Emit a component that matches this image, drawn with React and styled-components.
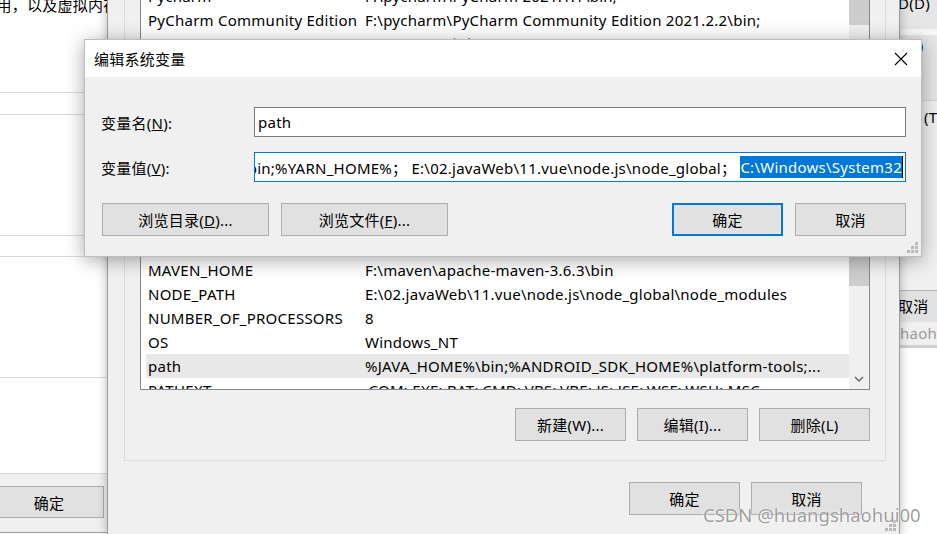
import React from "react";
import styled, { createGlobalStyle, css } from "styled-components";

const GlobalStyle = createGlobalStyle`
  html, body { margin: 0; padding: 0; }
  body {
    background: #ffffff;
    font-family: "Noto Sans", "Noto Sans CJK SC", sans-serif;
    font-size: 15px;
    color: #000;
    overflow: hidden;
  }
  * { box-sizing: border-box; }
`;

const Desktop = styled.div`
  position: relative;
  width: 937px;
  height: 534px;
  overflow: hidden;
  background: #fff;
  letter-spacing: 0.25px;
`;

/* ---- window behind, on the left ---- */
const BackWindow = styled.div`
  position: absolute;
  left: -60px;
  top: -40px;
  width: 190px;
  height: 573px;
  background: #fff;
  border-bottom: 1px solid #9d9d9d;
  display: flex;
  flex-direction: column;
  z-index: 1;
`;

const Band = styled.div`
  height: ${({ $h }) => $h}px;
  flex-shrink: 0;
  border-bottom: ${({ $line }) => ($line ? "1px solid #dadada" : "none")};
  padding: ${({ $pad }) => $pad || 0};
  line-height: 20px;
  white-space: nowrap;
`;

const BackFooter = styled.div`
  flex: 1;
  background: #f0f0f0;
  border-top: 1px solid #dadada;
  display: flex;
  justify-content: flex-end;
  align-items: flex-start;
  padding: 12px 26px 0 0;
`;

/* ---- window behind, on the right ---- */
const SideWindow = styled.div`
  position: absolute;
  left: 880px;
  top: -20px;
  width: 120px;
  height: 600px;
  background: #f0f0f0;
  display: flex;
  flex-direction: column;
  z-index: 1;
`;

const SideItem = styled.div`
  height: ${({ $h }) => $h}px;
  flex-shrink: 0;
  background: ${({ $bg }) => $bg || "#f0f0f0"};
  border-top: ${({ $line }) => ($line ? `1px solid ${$line}` : "none")};
  padding: ${({ $top }) => $top || 0}px 0 0 ${({ $left }) => $left || 0}px;
  color: ${({ $muted }) => ($muted ? "#9a9a9a" : "#000")};
  line-height: 20px;
  white-space: nowrap;
  overflow: hidden;
`;

const SideFill = styled.div`
  flex: 1;
  background: #fff;
  border-top: 3px solid #cfcfcf;
`;

/* ---- environment variables window ---- */
const EnvWindow = styled.div`
  position: absolute;
  left: 107px;
  top: -80px;
  width: 793px;
  height: 615px;
  background: #f0f0f0;
  border: 1px solid #9b9b9b;
  box-shadow: 0 0 10px rgba(0, 0, 0, 0.28);
  padding: 9px 13px 0 16px;
  display: flex;
  flex-direction: column;
  z-index: 2;
`;

const GroupBox = styled.div`
  border: 1px solid #dcdcdc;
  padding: ${({ $top }) => $top}px 15px ${({ $bottom }) => $bottom}px 15px;
  margin-bottom: ${({ $gap }) => $gap || 0}px;
  display: flex;
  flex-direction: column;
`;

const ListView = styled.div`
  display: flex;
  height: ${({ $h }) => $h}px;
  background: #fff;
  border: 1px solid #828790;
  overflow: hidden;
`;

const Rows = styled.div`
  flex: 1;
  min-width: 0;
  padding-left: 5px;
`;

const Row = styled.div`
  display: flex;
  align-items: center;
  height: 24px;
  white-space: nowrap;
  background: ${({ $selected }) => ($selected ? "#e8e8e8" : "transparent")};
`;

const NameCell = styled.span`
  width: 219px;
  flex-shrink: 0;
  padding-left: 2px;
  overflow: hidden;
`;

const ValueCell = styled.span`
  flex: 1;
  overflow: hidden;
`;

const ScrollTrack = styled.div`
  width: 20px;
  flex-shrink: 0;
  background: #f0f0f0;
  display: flex;
  flex-direction: column;
`;

const Thumb = styled.div`
  margin-top: ${({ $top }) => $top}px;
  height: ${({ $h }) => $h}px;
  background: #cdcdcd;
`;

const ArrowCell = styled.div`
  margin-top: auto;
  height: 21px;
  display: flex;
  align-items: center;
  justify-content: center;
`;

const ButtonRow = styled.div`
  display: flex;
  justify-content: ${({ $between }) => ($between ? "space-between" : "flex-end")};
  gap: ${({ $gap }) => $gap || 11}px;
  margin-top: ${({ $mt }) => $mt || 0}px;
  padding-right: ${({ $pr }) => $pr || 0}px;
`;

const ButtonGroup = styled.div`
  display: flex;
  gap: 12px;
  margin-left: ${({ $ml }) => $ml || 0}px;
`;

const Button = styled.button`
  width: ${({ $w }) => $w || 111}px;
  height: ${({ $h }) => $h || 33}px;
  flex-shrink: 0;
  padding: 0;
  background: #e1e1e1;
  border: 1px solid #adadad;
  border-radius: 0;
  font: inherit;
  letter-spacing: inherit;
  color: #000;

  ${({ $default }) =>
    $default &&
    css`
      border: 2px solid #0078d7;
    `};
`;

const Grip = styled.svg`
  position: absolute;
  right: 3px;
  bottom: 3px;
`;

/* ---- edit dialog in front ---- */
const EditDialog = styled.div`
  position: absolute;
  left: 84px;
  top: 39px;
  width: 838px;
  height: 218px;
  background: #f0f0f0;
  border: 1px solid #bdbdbd;
  box-shadow: 0 3px 18px rgba(0, 0, 0, 0.35);
  display: flex;
  flex-direction: column;
  z-index: 3;
`;

const TitleBar = styled.div`
  height: 37px;
  flex-shrink: 0;
  background: #fff;
  display: flex;
  align-items: center;
  justify-content: space-between;
  padding-left: 9px;
`;

const CloseButton = styled.div`
  width: 40px;
  height: 37px;
  display: flex;
  align-items: center;
  justify-content: center;
`;

const DialogBody = styled.div`
  flex: 1;
  padding: 30px 15px 0 16px;
  display: flex;
  flex-direction: column;
`;

const FieldGrid = styled.div`
  display: grid;
  grid-template-columns: 153px 1fr;
  row-gap: 15px;
  align-items: center;
`;

const Field = styled.div`
  height: 30px;
  background: #fff;
  border: 1px solid ${({ $focused }) => ($focused ? "#0078d7" : "#7a7a7a")};
  display: flex;
  align-items: center;
  justify-content: ${({ $end }) => ($end ? "flex-end" : "flex-start")};
  padding: 0 2px 0 3px;
  overflow: hidden;
  white-space: nowrap;
`;

const FieldText = styled.span`
  flex-shrink: 0;
`;

const Selected = styled.span`
  flex-shrink: 0;
  background: #0078d7;
  color: #fff;
  line-height: 22px;
`;

const Caret = styled.span`
  width: 1px;
  height: 22px;
  flex-shrink: 0;
  background: #000;
`;

const Watermark = styled.div`
  position: absolute;
  left: 703px;
  top: 502px;
  font-size: 18.5px;
  letter-spacing: 0;
  color: rgba(90, 90, 90, 0.6);
  text-shadow: 0 0 1px #fff, 0 0 2px #fff;
  white-space: nowrap;
  z-index: 4;
`;

const userVars = [
  { name: "OneDrive", value: "C:\\Users\\用户名\\OneDrive" },
  { name: "Pycharm", value: "F:\\pycharm\\PyCharm 2021.1.1\\bin;" },
  {
    name: "PyCharm Community Edition",
    value: "F:\\pycharm\\PyCharm Community Edition 2021.2.2\\bin;",
  },
  { name: "TEMP", value: "C:\\Users\\用户名\\AppData\\Local\\Temp" },
  { name: "TMP", value: "C:\\Users\\用户名\\AppData\\Local\\Temp" },
];

const systemVars = [
  { name: "ComSpec", value: "C:\\Windows\\system32\\cmd.exe" },
  { name: "DriverData", value: "C:\\Windows\\System32\\Drivers\\DriverData" },
  { name: "JAVA_HOME", value: "C:\\Program Files\\Java\\jdk1.8.0_271" },
  { name: "MAVEN_HOME", value: "F:\\maven\\apache-maven-3.6.3\\bin" },
  {
    name: "NODE_PATH",
    value: "E:\\02.javaWeb\\11.vue\\node.js\\node_global\\node_modules",
  },
  { name: "NUMBER_OF_PROCESSORS", value: "8" },
  { name: "OS", value: "Windows_NT" },
  {
    name: "path",
    value: "%JAVA_HOME%\\bin;%ANDROID_SDK_HOME%\\platform-tools;...",
    selected: true,
  },
  {
    name: "PATHEXT",
    value: ".COM;.EXE;.BAT;.CMD;.VBS;.VBE;.JS;.JSE;.WSF;.WSH;.MSC",
  },
];

function ResizeGrip() {
  const dots = [
    [8, 0],
    [4, 4],
    [8, 4],
    [0, 8],
    [4, 8],
    [8, 8],
  ];
  return (
    <Grip width="11" height="11" viewBox="0 0 11 11">
      {dots.map(([x, y]) => (
        <rect key={`${x}-${y}`} x={x} y={y} width="3" height="3" fill="#b9b9b9" />
      ))}
    </Grip>
  );
}

function VarList({ vars, height, thumbTop, thumbHeight, showArrow }) {
  return (
    <ListView $h={height}>
      <Rows>
        {vars.map((v) => (
          <Row key={v.name} $selected={v.selected}>
            <NameCell>{v.name}</NameCell>
            <ValueCell>{v.value}</ValueCell>
          </Row>
        ))}
      </Rows>
      <ScrollTrack>
        <Thumb $top={thumbTop} $h={thumbHeight} />
        {showArrow && (
          <ArrowCell>
            <svg width="10" height="6" viewBox="0 0 10 6">
              <polyline points="1,1 5,5 9,1" fill="none" stroke="#606060" strokeWidth="1.3" />
            </svg>
          </ArrowCell>
        )}
      </ScrollTrack>
    </ListView>
  );
}

function BackLeft() {
  return (
    <BackWindow>
      <Band $h={133} $line $pad="35px 0 0 26px">
        存使用，以及虚拟内存
      </Band>
      <Band $h={22} $line />
      <Band $h={121} $line />
      <Band $h={21} $line />
      <Band $h={121} $line />
      <Band $h={95} />
      <BackFooter>
        <Button $w={110} $h={32}>
          确定
        </Button>
      </BackFooter>
    </BackWindow>
  );
}

function BackRight() {
  return (
    <SideWindow>
      <SideItem $h={49} $bg="#e6e6e6" $top={13} $left={18}>
        D(D)
      </SideItem>
      <SideItem $h={6} $bg="#f7f7f7" />
      <SideItem $h={65} $bg="#e6e6e6" $left={10}>
        (E:D)
      </SideItem>
      <SideItem $h={190} $line="#d0d0d0" $top={6} $left={44}>
        (T)
      </SideItem>
      <SideItem $h={32} $bg="#e1e1e1" $line="#b5b5b5" $top={5} $left={18}>
        取消
      </SideItem>
      <SideItem $h={23} $top={1} $left={20} $muted>
        haohui00
      </SideItem>
      <SideFill />
    </SideWindow>
  );
}

function EnvironmentWindow() {
  return (
    <EnvWindow>
      <GroupBox $top={28} $bottom={12} $gap={13}>
        <VarList vars={userVars} height={122} thumbTop={20} thumbHeight={45} />
        <ButtonRow $mt={19}>
          <Button>新建(N)...</Button>
          <Button>编辑(E)...</Button>
          <Button>删除(D)</Button>
        </ButtonRow>
      </GroupBox>
      <GroupBox $top={25} $bottom={19}>
        <VarList vars={systemVars} height={205} thumbTop={70} thumbHeight={30} showArrow />
        <ButtonRow $mt={18}>
          <Button>新建(W)...</Button>
          <Button>编辑(I)...</Button>
          <Button>删除(L)</Button>
        </ButtonRow>
      </GroupBox>
      <ButtonRow $mt={21} $pr={24}>
        <Button>确定</Button>
        <Button>取消</Button>
      </ButtonRow>
      <ResizeGrip />
    </EnvWindow>
  );
}

function EditVariableDialog() {
  return (
    <EditDialog>
      <TitleBar>
        <span>编辑系统变量</span>
        <CloseButton>
          <svg width="14" height="14" viewBox="0 0 14 14">
            <path d="M1 1 L13 13 M13 1 L1 13" stroke="#000" strokeWidth="1.1" fill="none" />
          </svg>
        </CloseButton>
      </TitleBar>
      <DialogBody>
        <FieldGrid>
          <span>
            变量名(<u>N</u>):
          </span>
          <Field>
            <FieldText>path</FieldText>
          </Field>
          <span>
            变量值(<u>V</u>):
          </span>
          <Field $focused $end>
            <FieldText>
              %JAVA_HOME%\bin;%YARN_HOME%；&nbsp;E:\02.javaWeb\11.vue\node.js\node_global；&nbsp;
            </FieldText>
            <Selected>C:\Windows\System32</Selected>
            <Caret />
          </Field>
        </FieldGrid>
        <ButtonRow $between $mt={21}>
          <ButtonGroup $ml={1}>
            <Button $w={167}>
              浏览目录(<u>D</u>)...
            </Button>
            <Button $w={167}>
              浏览文件(<u>F</u>)...
            </Button>
          </ButtonGroup>
          <ButtonGroup>
            <Button $default>确定</Button>
            <Button>取消</Button>
          </ButtonGroup>
        </ButtonRow>
      </DialogBody>
      <ResizeGrip />
    </EditDialog>
  );
}

export default function App() {
  return (
    <>
      <GlobalStyle />
      <Desktop>
        <BackLeft />
        <BackRight />
        <EnvironmentWindow />
        <EditVariableDialog />
        <Watermark>CSDN @huangshaohui00</Watermark>
      </Desktop>
    </>
  );
}
